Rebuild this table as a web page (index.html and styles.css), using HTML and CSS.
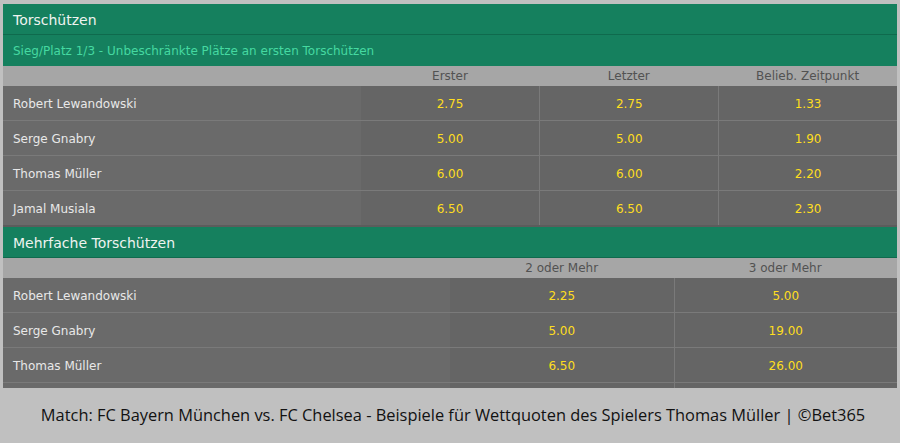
FILE: index.html
```html
<!DOCTYPE html>
<html lang="de">
<head>
<meta charset="utf-8">
<title>Torschützen</title>
<link rel="stylesheet" href="styles.css">
</head>
<body>
<div class="board">
  <section class="market">
    <div class="market-head">Torschützen</div>
    <div class="market-sub">Sieg/Platz 1/3 - Unbeschränkte Plätze an ersten Torschützen</div>
    <div class="grid grid-3">
      <div class="colhead"></div>
      <div class="colhead">Erster</div>
      <div class="colhead">Letzter</div>
      <div class="colhead">Belieb. Zeitpunkt</div>

      <div class="name">Robert Lewandowski</div>
      <div class="odd">2.75</div>
      <div class="odd">2.75</div>
      <div class="odd">1.33</div>

      <div class="name">Serge Gnabry</div>
      <div class="odd">5.00</div>
      <div class="odd">5.00</div>
      <div class="odd">1.90</div>

      <div class="name">Thomas Müller</div>
      <div class="odd">6.00</div>
      <div class="odd">6.00</div>
      <div class="odd">2.20</div>

      <div class="name last">Jamal Musiala</div>
      <div class="odd last">6.50</div>
      <div class="odd last">6.50</div>
      <div class="odd last">2.30</div>
    </div>
  </section>

  <section class="market market-second">
    <div class="market-head">Mehrfache Torschützen</div>
    <div class="grid grid-2">
      <div class="colhead"></div>
      <div class="colhead">2 oder Mehr</div>
      <div class="colhead">3 oder Mehr</div>

      <div class="name">Robert Lewandowski</div>
      <div class="odd">2.25</div>
      <div class="odd">5.00</div>

      <div class="name">Serge Gnabry</div>
      <div class="odd">5.00</div>
      <div class="odd">19.00</div>

      <div class="name">Thomas Müller</div>
      <div class="odd">6.50</div>
      <div class="odd">26.00</div>

      <div class="name"></div>
      <div class="odd"></div>
      <div class="odd"></div>
    </div>
  </section>
</div>
<footer class="caption">Match: FC Bayern München vs. FC Chelsea - Beispiele für Wettquoten des Spielers Thomas Müller | ©Bet365</footer>
</body>
</html>
```
FILE: styles.css
```css
* { box-sizing: border-box; }

html, body {
  margin: 0;
  padding: 0;
}

body {
  width: 900px;
  height: 443px;
  overflow: hidden;
  background: #c0c0c0;
  font-family: "DejaVu Sans", Verdana, sans-serif;
}

.board {
  margin: 4px 3px 0 3px;
  height: 384px;
  overflow: hidden;
  background: #5c5c5c;
}

.market-head {
  height: 31px;
  padding: 2px 10px 0;
  display: flex;
  align-items: center;
  background: #15805e;
  border-bottom: 1px solid #0f6a4d;
  color: #eef3f0;
  font-size: 14px;
}

.market-sub {
  height: 31px;
  padding: 0 10px;
  display: flex;
  align-items: center;
  background: #15805e;
  color: #45d9a1;
  font-size: 12px;
}

.market-second {
  margin-top: 2px;
}

.grid {
  display: grid;
}

.grid-3 {
  grid-template-columns: 2fr 1fr 1fr 1fr;
}

.grid-2 {
  grid-template-columns: 2fr 1fr 1fr;
}

.colhead {
  height: 20px;
  display: flex;
  align-items: center;
  justify-content: center;
  background: #a6a6a6;
  color: #525252;
  font-size: 12px;
}

.name {
  height: 35px;
  padding: 2px 10px 0;
  display: flex;
  align-items: center;
  background: #6a6a6a;
  border-bottom: 1px solid #7a7a7a;
  color: #e8e8e8;
  font-size: 12px;
}

.odd {
  height: 35px;
  padding-top: 2px;
  display: flex;
  align-items: center;
  justify-content: center;
  background: #656565;
  border-bottom: 1px solid #7a7a7a;
  border-left: 1px solid #7a7a7a;
  color: #ffde1e;
  font-size: 12px;
}

.name + .odd {
  border-left: none;
}

.last {
  border-bottom: none;
  height: 34px;
}

.caption {
  height: 55px;
  display: flex;
  align-items: center;
  justify-content: center;
  padding-left: 6px;
  padding-bottom: 3px;
  font-family: "Open Sans", sans-serif;
  font-size: 16.4px;
  color: #121212;
}
```
